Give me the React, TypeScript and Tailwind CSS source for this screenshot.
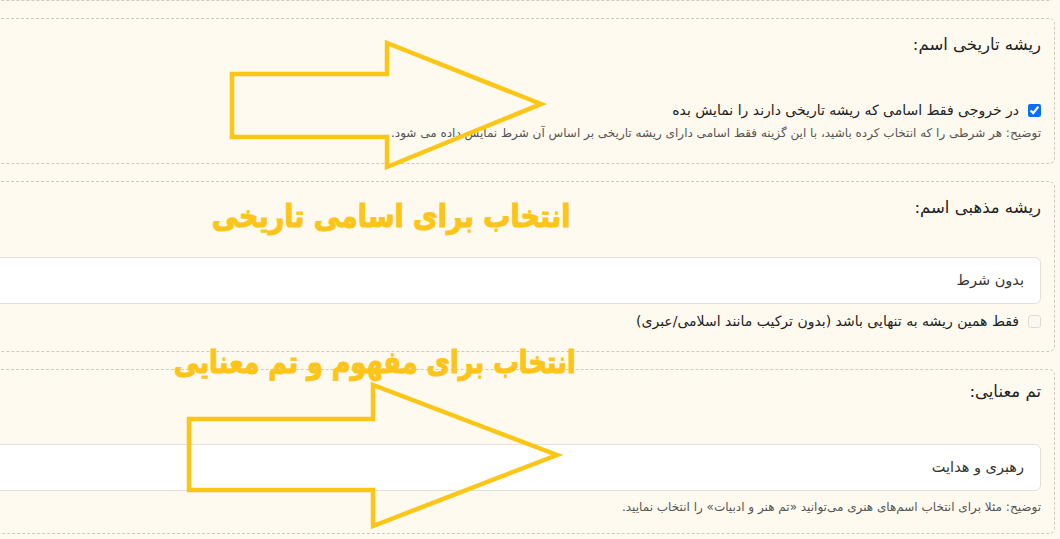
import React from "react";

const font = { fontFamily: '"DejaVu Sans", "Noto Sans", sans-serif' };

function Arrow({ points }: { points: string }) {
  return (
    <polygon
      points={points}
      fill="none"
      stroke="#fcc617"
      strokeWidth={4.5}
      strokeLinejoin="miter"
    />
  );
}

function Card({ children, className = "" }: { children: React.ReactNode; className?: string }) {
  return (
    <div
      className={`ml-[-60px] rounded-md border border-dashed border-[#cfcac0] bg-[#fffaf0] pr-[13px] pl-4 ${className}`}
    >
      {children}
    </div>
  );
}

export default function App() {
  return (
    <div
      dir="rtl"
      style={font}
      className="relative h-[539px] w-[1060px] overflow-hidden bg-[#fffaf0] pr-[5px] text-[#222]"
    >
      <div className="flex flex-col gap-[17px]">
        {/* previous card, only its bottom edge shows */}
        <Card className="mt-[-40px] h-[41px]">
          <span />
        </Card>

        {/* historical root */}
        <Card className="h-[146px] pt-[12px]">
          <div className="text-[16.5px] font-medium leading-[28px]">ریشه تاریخی اسم:</div>
          <label className="mt-[41px] flex items-center gap-[9px] text-[14px] leading-[20px]">
            <input
              type="checkbox"
              defaultChecked
              className="h-[13px] w-[13px] shrink-0 accent-[#0d6efd]"
            />
            <span>در خروجی فقط اسامی که ریشه تاریخی دارند را نمایش بده</span>
          </label>
          <p className="mt-[3px] whitespace-nowrap text-[12px] leading-[20px] text-[#555]">
            توضیح: هر شرطی را که انتخاب کرده باشید، با این گزینه فقط اسامی دارای ریشه تاریخی بر اساس آن شرط نمایش داده می شود.
          </p>
        </Card>

        {/* religious root */}
        <Card className="h-[171px] pt-[12px]">
          <div className="text-[16.5px] font-medium leading-[28px]">ریشه مذهبی اسم:</div>
          <div className="mt-[35px] flex h-[47px] items-center rounded-md border border-[#e2e0dc] bg-white pr-[16px] text-[14.5px] text-[#333]">
            بدون شرط
          </div>
          <label className="mt-[7px] flex items-center gap-[9px] text-[14px] leading-[20px]">
            <span className="h-[13px] w-[13px] shrink-0 rounded-[3px] border border-[#dedbd5] bg-[#fbf8f2]" />
            <span>فقط همین ریشه به تنهایی باشد (بدون ترکیب مانند اسلامی/عبری)</span>
          </label>
        </Card>

        {/* semantic theme */}
        <Card className="h-[165px] pt-[8px]">
          <div className="text-[16.5px] font-medium leading-[28px]">تم معنایی:</div>
          <div className="mt-[38px] flex h-[47px] items-center rounded-md border border-[#e2e0dc] bg-white pr-[16px] text-[14.5px] text-[#333]">
            رهبری و هدایت
          </div>
          <p className="mt-[6px] whitespace-nowrap text-[12px] leading-[20px] text-[#555]">
            توضیح: مثلا برای انتخاب اسم‌های هنری می‌توانید «تم هنر و ادبیات» را انتخاب نمایید.
          </p>
        </Card>
      </div>

      {/* annotations drawn over the form */}
      <svg className="pointer-events-none absolute left-0 top-0" width="1060" height="539">
        <Arrow points="232,74 387,74 387,43 541,104 387,167 387,137 232,137" />
        <Arrow points="189,419 373,419 373,385 557,455 373,526 373,490 189,490" />
      </svg>
      <div className="pointer-events-none absolute left-[141px] top-[194px] flex w-[500px] justify-center">
        <span className="scale-x-[0.87] whitespace-nowrap text-[31px] font-bold leading-[44px] text-[#fdc51a] [-webkit-text-stroke:1.2px_#fdc51a]">
          انتخاب برای اسامی تاریخی
        </span>
      </div>
      <div className="pointer-events-none absolute left-[125px] top-[340px] flex w-[500px] justify-center">
        <span className="scale-x-[0.825] whitespace-nowrap text-[31px] font-bold leading-[44px] text-[#fdc51a] [-webkit-text-stroke:1.2px_#fdc51a]">
          انتخاب برای مفهوم و تم معنایی
        </span>
      </div>
    </div>
  );
}
